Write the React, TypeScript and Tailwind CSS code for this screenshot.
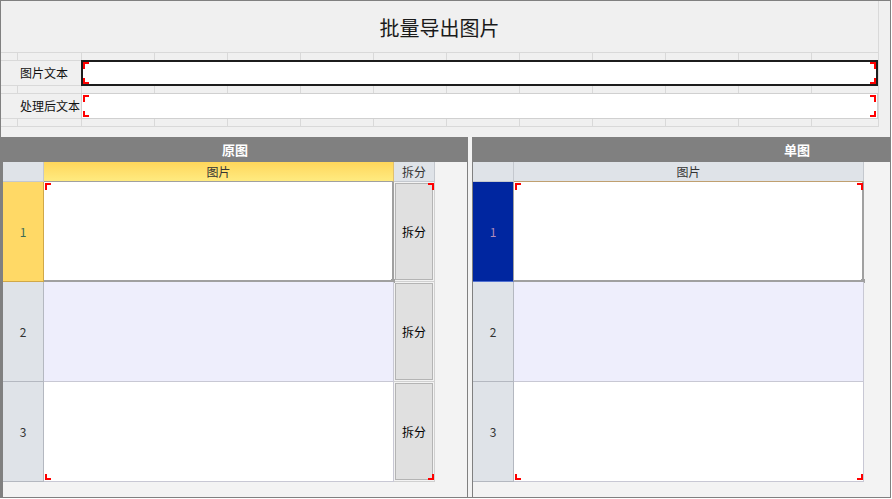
import React from 'react';

// column lines of the top form grid (after the two label columns)
const GRID_COLS = Array.from({ length: 10 });

const ROWS = [
  { n: 1, bg: 'bg-white', selected: true },
  { n: 2, bg: 'bg-[#eeeefc]', selected: false },
  { n: 3, bg: 'bg-white', selected: false },
];

// red selection corner marks
const Corners: React.FC<{ className: string }> = ({ className }) => (
  <div className={`pointer-events-none absolute ${className}`}>
    <span className="absolute left-0 top-0 w-[6px] h-[7px] border-l-2 border-t-2 border-[#ff0000]" />
    <span className="absolute right-0 top-0 w-[6px] h-[7px] border-r-2 border-t-2 border-[#ff0000]" />
    <span className="absolute left-0 bottom-0 w-[6px] h-[6px] border-l-2 border-b-2 border-[#ff0000]" />
    <span className="absolute right-0 bottom-0 w-[6px] h-[6px] border-r-2 border-b-2 border-[#ff0000]" />
  </div>
);

const SpacerRow: React.FC<{ className?: string }> = ({ className = '' }) => (
  <div className={`flex border-[#d9d9d9] ${className}`}>
    <div className="w-[17px] border-r border-[#d9d9d9]" />
    <div className="w-[64px] border-r border-[#d9d9d9]" />
    {GRID_COLS.map((_, i) => (
      <div key={i} className="w-[73px] border-r border-[#d9d9d9]" />
    ))}
    <div className="flex-1" />
  </div>
);

const FormRow: React.FC<{ label: string; active?: boolean }> = ({ label, active }) => (
  <div className="flex h-[26px]">
    <div className="w-[80px] flex items-center pl-[19px] text-[12px] text-[#111] border-y border-[#d9d9d9]">
      {label}
    </div>
    <div
      className={`relative flex-1 bg-white ${
        active ? 'border-2 border-[#1c1c1c]' : 'border border-[#d0d0d0]'
      }`}
    >
      <Corners className={active ? 'inset-0' : 'inset-[1px]'} />
    </div>
  </div>
);

const PanelHeader: React.FC<{ title: string; className?: string }> = ({ title, className = '' }) => (
  <div className={`h-[25px] flex items-center bg-[#808080] text-white font-bold text-[13px] ${className}`}>
    {title}
  </div>
);

const RowHeader: React.FC<{ n: number; selected: boolean; blue?: boolean }> = ({ n, selected, blue }) => {
  let cls = 'bg-[#dfe3e8] border-[#b4b8c0] text-[#333]';
  if (selected && blue) cls = 'bg-[#0026a0] border-r-[#a0a0a0] border-b-[#5070d0] text-[#b08cb8]';
  else if (selected) cls = 'bg-[#ffd966] border-[#d0a848] text-[#3d6b58]';
  return (
    <div className={`w-[41px] flex items-center justify-center border-r border-b text-[12px] ${cls}`}>{n}</div>
  );
};

const ImageCell: React.FC<{ bg: string; selected: boolean }> = ({ bg, selected }) => (
  <div
    className={`relative w-[350px] ${
      selected ? 'bg-white border-r-2 border-b-2 border-[#a0a0a0]' : `${bg} border-r border-b border-[#c8c8d4]`
    }`}
  >
    {selected && <span className="absolute -right-[3px] -bottom-[3px] w-[4px] h-[4px] bg-[#a0a0a0]" />}
  </div>
);

export default function App() {
  return (
    <div className="w-[891px] h-[498px] border border-[#808080] flex flex-col overflow-hidden bg-[#f3f3f3] font-['Noto_Sans_CJK_SC','Microsoft_YaHei',sans-serif]">
      {/* Top form area */}
      <div className="h-[136px] shrink-0 bg-[#f0f0f0] flex items-start">
        <div className="w-[878px] border-r border-[#d9d9d9] flex flex-col">
          <div className="h-[51px] flex items-center justify-center pt-[3px] text-[20px] text-[#1a1a1a]">
            批量导出图片
          </div>
          <SpacerRow className="h-[8px] border-t" />
          <FormRow label="图片文本" active />
          <SpacerRow className="h-[7px]" />
          <FormRow label="处理后文本" />
          <SpacerRow className="h-[8px] border-b" />
        </div>
      </div>

      {/* Bottom panels */}
      <div className="flex-1 flex gap-[4px]">
        {/* 原图 */}
        <div className="w-[467px] flex flex-col border-l-2 border-r border-[#808080]">
          <PanelHeader title="原图" className="justify-center" />
          <div className="flex h-[20px] text-[12px] text-[#333]">
            <div className="w-[41px] bg-[#dfe3e8] border-r border-b border-[#c4c8ce]" />
            <div className="w-[350px] flex items-center justify-center bg-linear-to-b from-[#ffd65a] to-[#ffeb80] border-r border-r-[#e0c070] border-b border-b-[#a0a0a0]">
              图片
            </div>
            <div className="w-[41px] flex items-center justify-center bg-[#dfe3e8] border-r border-b border-[#c4c8ce]">
              拆分
            </div>
          </div>
          <div className="relative">
            {ROWS.map((r) => (
              <div key={r.n} className="flex h-[100px]">
                <RowHeader n={r.n} selected={r.selected} />
                <ImageCell bg={r.bg} selected={r.selected} />
                <div className="w-[41px] border-r border-b border-[#d0d0d0] p-px">
                  <div className="h-full flex items-center justify-center bg-[#e0e0e0] border border-[#b4b4b4] text-[12px] text-black">
                    拆分
                  </div>
                </div>
              </div>
            ))}
            <Corners className="left-[42px] top-[1px] w-[389px] h-[297px]" />
          </div>
        </div>

        {/* 单图 */}
        <div className="flex-1 flex flex-col border-l border-[#808080]">
          <PanelHeader title="单图" className="pl-[311px]" />
          <div className="flex h-[20px] text-[12px] text-[#333]">
            <div className="w-[41px] bg-[#dfe3e8] border-r border-b border-[#c4c8ce]" />
            <div className="w-[350px] flex items-center justify-center bg-[#dfe3e8] border-r border-r-[#c4c8ce] border-b border-b-[#c0a070]">
              图片
            </div>
          </div>
          <div className="relative">
            {ROWS.map((r) => (
              <div key={r.n} className="flex h-[100px]">
                <RowHeader n={r.n} selected={r.selected} blue />
                <ImageCell bg={r.bg} selected={r.selected} />
              </div>
            ))}
            <Corners className="left-[42px] top-[1px] w-[348px] h-[297px]" />
          </div>
        </div>
      </div>
    </div>
  );
}
